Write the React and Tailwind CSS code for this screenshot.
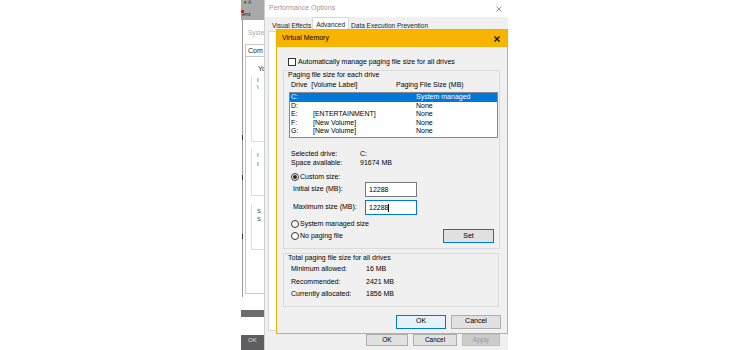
import React from "react";

const font = { fontFamily: '"Liberation Sans", Arial, sans-serif' };

// little win10 widgets
function Radio({ checked }) {
  return (
    <span className="w-[8px] h-[8px] rounded-full border border-[#333] bg-white flex items-center justify-center shrink-0">
      {checked && <span className="w-[4px] h-[4px] rounded-full bg-[#222]" />}
    </span>
  );
}

function Close({ color, size = 6, width = 1.2 }) {
  return (
    <svg width={size} height={size} viewBox="0 0 6 6">
      <path d="M0.5 0.5 L5.5 5.5 M5.5 0.5 L0.5 5.5" stroke={color} strokeWidth={width} />
    </svg>
  );
}

const drives = [
  { d: "C:", label: "", size: "System managed", sel: true },
  { d: "D:", label: "", size: "None" },
  { d: "E:", label: "[ENTERTAINMENT]", size: "None" },
  { d: "F:", label: "[New Volume]", size: "None" },
  { d: "G:", label: "[New Volume]", size: "None" },
];

function BackStrip() {
  // edge of the System Properties window peeking out on the left
  return (
    <div className="absolute left-[241px] top-0 w-[24px] h-[350px] bg-white overflow-hidden">
      <div className="h-[20px] bg-[#a9a9a9] relative">
        <span className="absolute left-[3px] top-0 text-[5px] leading-[5px] text-[#333]">▾ A</span>
        <span className="absolute left-0 top-[10px] w-[3px] h-[3px] bg-[#e11]" />
        <span className="absolute left-[1px] top-[11px] text-[6px] leading-[7px] text-[#222]">ent</span>
      </div>
      <div className="h-[277px] border-l border-[#9a9a9a] ml-[1px] relative">
        <span className="absolute left-[5px] top-[8px] text-[6.5px] text-[#aaa]">Syste</span>
        <div className="absolute left-[2px] top-[24px] w-[24px] h-[13px] border border-[#c8c8c8] border-r-0 text-[7px] pl-[2px] leading-[12px] text-[#222]">
          Com
        </div>
        <div className="absolute left-[2px] top-[36px] w-[24px] h-[238px] border-l border-b border-[#c8c8c8]" />
        <span className="absolute left-[15px] top-[44px] text-[7px] text-[#222]">Yo</span>
        <span className="absolute left-[14px] top-[56px] text-[6px] text-[#444]">I</span>
        <span className="absolute left-[14px] top-[63px] text-[6px] text-[#444]">\</span>
        <div className="absolute left-[8px] top-[56px] w-[20px] h-[66px] border-l border-b border-[#dcdcdc]" />
        <div className="absolute left-[8px] top-[128px] w-[20px] h-[48px] border-l border-b border-[#dcdcdc]" />
        <span className="absolute left-[14px] top-[131px] text-[6px] text-[#444]">I</span>
        <span className="absolute left-[14px] top-[140px] text-[6px] text-[#444]">I</span>
        <div className="absolute left-[8px] top-[184px] w-[20px] h-[46px] border-l border-b border-[#dcdcdc]" />
        <span className="absolute left-[14px] top-[187px] text-[6px] text-[#444]">S</span>
        <span className="absolute left-[14px] top-[195px] text-[6px] text-[#444]">S</span>
        <span className="absolute left-[-1px] top-[115px] w-[1px] h-[5px] bg-[#333]" />
        <span className="absolute left-[-1px] top-[155px] w-[1px] h-[5px] bg-[#333]" />
        <span className="absolute left-[-1px] top-[214px] w-[1px] h-[5px] bg-[#333]" />
      </div>
      <div className="mt-[13px] h-[7px] bg-[#6d6d6d]" />
      <div className="mt-[18px] h-[15px] bg-[#5e5e5e] text-[6px] text-[#ddd] pl-[7px] leading-[10px]">OK</div>
    </div>
  );
}

function PerfWindow() {
  return (
    <div className="absolute left-[264px] top-0 w-[244px] h-[350px] bg-[#f0f0f0] border-l border-[#d0d0d0] flex flex-col">
      <div className="h-[17px] bg-white flex items-center justify-between pl-[4px] pr-[6px] shrink-0">
        <span className="text-[7px] text-[#9a9a9a]">Performance Options</span>
        <Close color="#8a8a8a" size={6} width={0.9} />
      </div>
      <div className="flex items-end h-[14px] pl-[6px] text-[6.5px] text-[#222] shrink-0">
        <span className="px-[1px] leading-[11px]">Visual Effects</span>
        <span className="px-[3px] leading-[13px] bg-white border border-b-0 border-[#d9d9d9]">Advanced</span>
        <span className="px-[2px] leading-[11px]">Data Execution Prevention</span>
      </div>
      <div className="flex-1 mx-[3px] bg-white border border-[#d9d9d9]" />
      <div className="h-[19px] flex items-start justify-end gap-[5px] pr-[8px] pt-[3px] text-[6.5px] shrink-0">
        <span className="w-[42px] h-[12px] bg-[#e1e1e1] border border-[#adadad] flex items-center justify-center">OK</span>
        <span className="w-[44px] h-[12px] bg-[#e1e1e1] border border-[#adadad] flex items-center justify-center">Cancel</span>
        <span className="w-[38px] h-[12px] bg-[#cccccc] border border-[#bfbfbf] text-[#9a9a9a] flex items-center justify-center">Apply</span>
      </div>
    </div>
  );
}

function VirtualMemory() {
  return (
    <div className="absolute left-[276px] top-[29px] w-[232px] h-[305px] bg-[#f0f0f0] border border-[#f0b000] flex flex-col text-[7px] text-black">
      <div className="h-[17px] bg-[#f8b500] flex items-center justify-between pl-[5px] pr-[7px] shrink-0">
        <span>Virtual Memory</span>
        <Close color="#111" size={6} width={1.3} />
      </div>

      <div className="mt-[11px] ml-[11px] h-[8px] flex items-center gap-[2px]">
        <span className="w-[8px] h-[8px] border border-[#333] bg-white shrink-0" />
        <span className="leading-[8px]">Automatically manage paging file size for all drives</span>
      </div>

      <div className="mt-[4px] ml-[6px] w-[217px] border border-[#dadada] flex flex-col pb-[5px]">
        <div className="pl-[4px] leading-[8px]">Paging file size for each drive</div>
        <div className="mt-[2px] pl-[7px] leading-[8px] flex">
          <span className="w-[105px]">Drive&nbsp; [Volume Label]</span>
          <span>Paging File Size (MB)</span>
        </div>
        <div className="mt-[3px] ml-[5px] mr-[1px] h-[46px] bg-white border border-[#828790]">
          {drives.map((r) => (
            <div
              key={r.d}
              className={
                "h-[8.5px] leading-[8.5px] flex pl-[1px] " +
                (r.sel ? "bg-[#0078d7] text-white" : "")
              }
            >
              <span className="w-[22px]">{r.d}</span>
              <span className="w-[103px]">{r.label}</span>
              <span>{r.size}</span>
            </div>
          ))}
        </div>

        <div className="mt-[11px] pl-[7px] flex flex-col leading-[9px]">
          <div className="flex"><span className="w-[69px]">Selected drive:</span><span>C:</span></div>
          <div className="flex"><span className="w-[69px]">Space available:</span><span>91674 MB</span></div>
        </div>

        <div className="mt-[6px] ml-[7px] h-[8px] flex items-center gap-[1px]">
          <Radio checked />
          <span className="leading-[8px]">Custom size:</span>
        </div>
        <div className="mt-[1px] ml-[9px] flex items-center">
          <span className="w-[72px]">Initial size (MB):</span>
          <span className="w-[52px] h-[15px] bg-white border border-[#7a7a7a] pl-[3px] leading-[13px]">12288</span>
        </div>
        <div className="mt-[3px] ml-[9px] flex items-center">
          <span className="w-[72px]">Maximum size (MB):</span>
          <span className="w-[52px] h-[15px] bg-white border border-[#0078d7] pl-[3px] leading-[13px] flex items-center">
            12288<span className="w-[1px] h-[8px] bg-black" />
          </span>
        </div>

        <div className="mt-[5px] ml-[7px] h-[8px] flex items-center gap-[1px]">
          <Radio />
          <span className="leading-[8px]">System managed size</span>
        </div>
        <div className="mt-[1px] ml-[7px] mr-[5px] h-[14px] flex items-center justify-between">
          <div className="flex items-center gap-[1px]">
            <Radio />
            <span className="leading-[8px]">No paging file</span>
          </div>
          <span className="w-[51px] h-[14px] bg-[#e1e1e1] border border-[#0078d7] flex items-center justify-center">Set</span>
        </div>
      </div>

      <div className="mt-[4px] ml-[6px] w-[216px] border border-[#dadada] flex flex-col pb-[5px]">
        <div className="pl-[4px] leading-[8px]">Total paging file size for all drives</div>
        <div className="mt-[1px] pl-[7px] flex flex-col leading-[12.5px]">
          <div className="flex"><span className="w-[75px]">Minimum allowed:</span><span>16 MB</span></div>
          <div className="flex"><span className="w-[75px]">Recommended:</span><span>2421 MB</span></div>
          <div className="flex"><span className="w-[75px]">Currently allocated:</span><span>1856 MB</span></div>
        </div>
      </div>

      <div className="mt-[8px] mr-[6px] flex justify-end gap-[5px]">
        <span className="w-[50px] h-[14px] bg-[#e5f1fb] border border-[#0078d7] flex items-center justify-center">OK</span>
        <span className="w-[50px] h-[14px] bg-[#e1e1e1] border border-[#adadad] flex items-center justify-center">Cancel</span>
      </div>
    </div>
  );
}

export default function App() {
  return (
    <div className="w-[750px] h-[350px] bg-white relative overflow-hidden" style={font}>
      <BackStrip />
      <PerfWindow />
      <VirtualMemory />
    </div>
  );
}
